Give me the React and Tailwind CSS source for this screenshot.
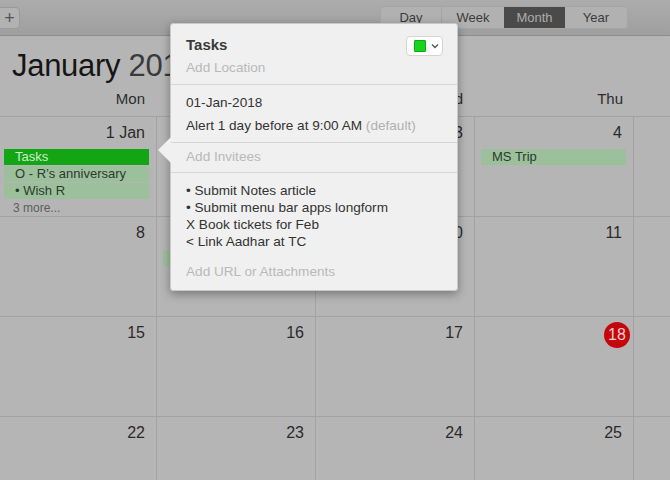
import React from 'react';

const rows = [
  ['1 Jan', '', '3', '4', ''],
  ['8', '', '10', '11', ''],
  ['15', '16', '17', '18', ''],
  ['22', '23', '24', '25', ''],
];

const Cell = ({ label, children, today }) => (
  <div className="border-r border-b border-[#a2a2a2] h-[100px] flex flex-col">
    <div className="flex justify-end pr-[11px] pt-[5px] h-[32px]">
      {today ? (
        <span className="w-[26px] h-[26px] -mr-[8px] rounded-full bg-[#c5070c] text-[#f3d0d0] text-[16px] flex items-center justify-center">
          {label}
        </span>
      ) : (
        <span className="text-[16px] text-[#2a2a2a] leading-[22px]">{label}</span>
      )}
    </div>
    {children}
  </div>
);

const Event = ({ children, strong }) => (
  <div
    className={
      strong
        ? 'ml-[6px] mr-[7px] h-[16px] mb-[1px] bg-[#13a513] text-[#cfeecf] text-[13px] leading-[16px] px-[11px]'
        : 'ml-[6px] mr-[7px] h-[16px] mb-[1px] bg-[#9cc09c] text-[#2c3a2c] text-[13px] leading-[16px] px-[11px]'
    }
  >
    {children}
  </div>
);

export default function App() {
  return (
    <div className="w-[670px] h-[480px] overflow-hidden relative bg-[#b5b5b5] font-['Liberation_Sans',sans-serif]">
      {/* toolbar */}
      <div className="h-[36px] flex items-center bg-gradient-to-b from-[#acacac] to-[#9f9f9f] border-b border-[#8d8d8d]">
        <div className="w-[21px] h-[22px] -ml-[1px] rounded-r-[4px] bg-[#b2b2b2] border border-[#9a9a9a] flex items-center justify-center text-[#555] text-[18px] font-light leading-none">
          +
        </div>
        <div className="ml-auto mr-[42px] flex h-[23px] rounded-[4px] bg-[#b1b1b1] border border-[#a5a5a5] text-[13px] text-[#3b3b3b] overflow-hidden">
          <div className="w-[61px] flex items-center justify-center border-r border-[#a3a3a3]">Day</div>
          <div className="w-[62px] flex items-center justify-center">Week</div>
          <div className="w-[61px] flex items-center justify-center bg-[#4a4a4a] text-[#acacac]">Month</div>
          <div className="w-[62px] flex items-center justify-center">Year</div>
        </div>
      </div>

      {/* header */}
      <div className="h-[80px] flex flex-col">
        <div className="w-[170px] overflow-hidden whitespace-nowrap pl-[12px] pt-[10px] h-[52px] text-[31px] leading-[40px] text-[#151515] tracking-[-0.3px]">
          January <span className="text-[#3a3a3a]">2018</span>
        </div>
        <div className="-ml-[2px] grid grid-cols-[repeat(5,159px)] text-[15px] text-[#2d2d2d]">
          <div className="text-right pr-[12px]">Mon</div>
          <div className="text-right pr-[12px]">Tue</div>
          <div className="text-right pr-[12px]">Wed</div>
          <div className="text-right pr-[11px]">Thu</div>
          <div />
        </div>
      </div>

      {/* month grid */}
      <div className="-ml-[2px] border-t border-[#a2a2a2] grid grid-cols-[repeat(5,159px)]">
        {rows.map((r, ri) =>
          r.map((d, ci) => (
            <Cell key={ri + '-' + ci} label={d} today={d === '18'}>
              {ri === 0 && ci === 0 && (
                <div className="flex flex-col">
                  <Event strong>Tasks</Event>
                  <Event>O - R’s anniversary</Event>
                  <Event>• Wish R</Event>
                  <div className="pl-[15px] text-[12px] leading-[16px] text-[#5e5e5e]">3 more...</div>
                </div>
              )}
              {ri === 0 && ci === 3 && <Event>MS Trip</Event>}
              {ri === 1 && ci === 1 && <div className="mt-[1px]"><Event>&nbsp;</Event></div>}
            </Cell>
          ))
        )}
      </div>

      {/* popover */}
      <div className="absolute left-[170px] top-[23px] w-[288px] h-[268px] bg-[#f0f0f0] rounded-[3px] shadow-[0_3px_10px_rgba(0,0,0,0.35)] border border-[#c9c9c9] text-[13.6px] text-[#333]">
        <div className="absolute -left-[13px] top-[113px] w-0 h-0 border-y-[13px] border-y-transparent border-r-[13px] border-r-[#f0f0f0]" />
        <div className="px-[15px] pt-[11px] pb-[3px] border-b border-[#d6d6d6] relative">
          <div className="text-[15px] font-bold leading-[20px] text-[#3a3a3a]">Tasks</div>
          <div className="leading-[26px] text-[#b9b9b9]">Add Location</div>
          <div className="absolute right-[14px] top-[12px] w-[37px] h-[20px] bg-white rounded-[4px] border border-[#d4d4d4] flex items-center pl-[7px] gap-[5px]">
            <span className="w-[12px] h-[12px] bg-[#17d41c] border border-[#12a815] rounded-[1px]" />
            <svg width="8" height="6" viewBox="0 0 8 6">
              <path d="M1 1.5 L4 4.5 L7 1.5" fill="none" stroke="#555" strokeWidth="1.4" />
            </svg>
          </div>
        </div>
        <div className="px-[15px] pt-[6px] pb-[5px] border-b border-[#d6d6d6] leading-[23px]">
          <div>01-Jan-2018</div>
          <div>
            Alert 1 day before at 9:00 AM <span className="text-[#b0b0b0]">(default)</span>
          </div>
        </div>
        <div className="px-[15px] h-[30px] flex items-center border-b border-[#d6d6d6] text-[#b9b9b9]">Add Invitees</div>
        <div className="px-[15px] pt-[9px] leading-[17px]">
          <div>• Submit Notes article</div>
          <div>• Submit menu bar apps longform</div>
          <div>X Book tickets for Feb</div>
          <div>&lt; Link Aadhar at TC</div>
        </div>
        <div className="px-[15px] pt-[13px] leading-[17px] text-[#b9b9b9]">Add URL or Attachments</div>
      </div>
    </div>
  );
}
